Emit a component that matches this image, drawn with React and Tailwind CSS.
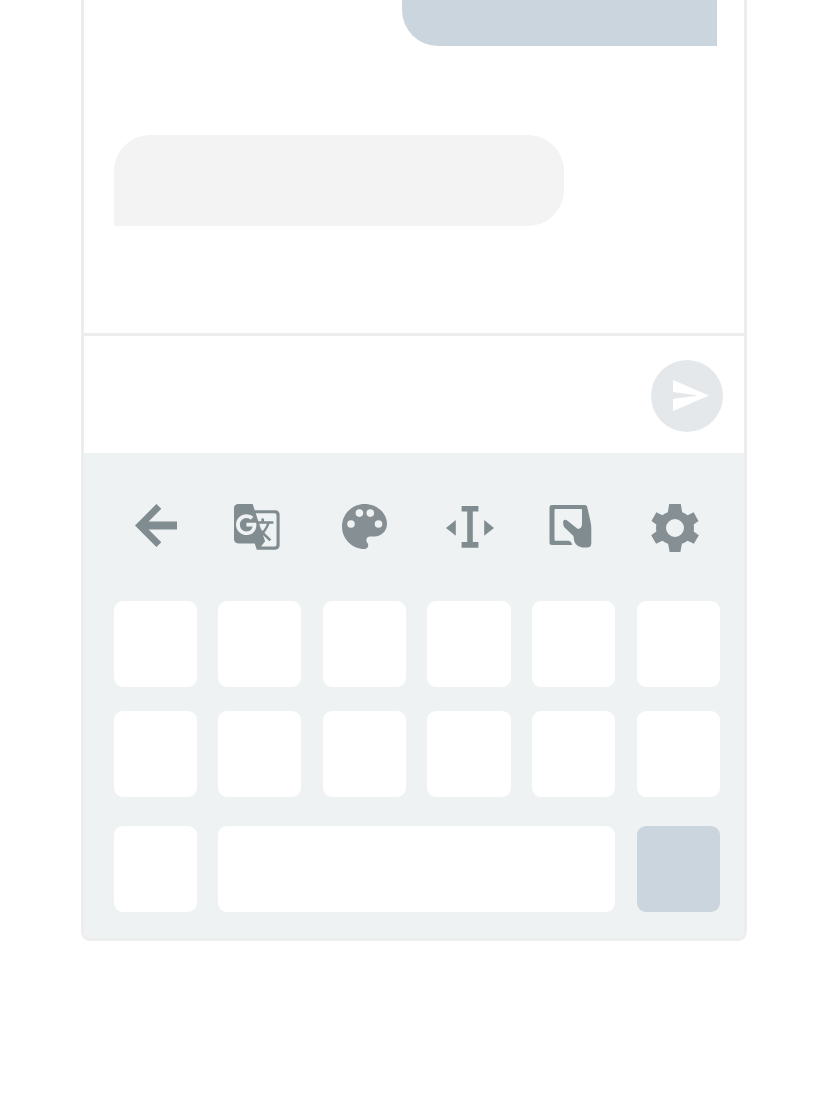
import { MdGTranslate } from "react-icons/md";

function Tool({ viewBox, label, children }) {
  return (
    <button aria-label={label} className="h-[70px] w-20">
      <svg viewBox={viewBox} className="block h-[70px] w-20" fill="currentColor">
        {children}
      </svg>
    </button>
  );
}

function Toolbar() {
  return (
    <div className="flex gap-6 pl-8 text-[#808c90]">
      <Tool label="Back" viewBox="-4 0 80 70">
        <path d="M15 35.6 36.4 14l4.9 4.8L28.6 31.5H57v8.1H28.6L41.3 52.3l-4.9 4.8Z" />
      </Tool>
      <Tool label="Translate" viewBox="0 0 80 70">
        <MdGTranslate x="11.9" y="11.9" size="49.8" />
      </Tool>
      <Tool label="Theme" viewBox="-1 0 80 70">
        <path
          fill="#868f94"
          transform="translate(9.5 6.5) scale(2.5)"
          d="M12 3c-4.97 0-9 4.03-9 9s4.03 9 9 9c.83 0 1.5-.67 1.5-1.5 0-.39-.15-.74-.39-1.01-.23-.26-.38-.61-.38-.99 0-.83.67-1.5 1.5-1.5H16c2.76 0 5-2.24 5-5 0-4.42-4.03-8-9-8z"
        />
        <g fill="#eef2f3">
          <circle cx="26" cy="34" r="3.8" />
          <circle cx="34.4" cy="23.1" r="3.8" />
          <circle cx="45.3" cy="23.1" r="3.8" />
          <circle cx="53.5" cy="34" r="3.8" />
        </g>
      </Tool>
      <Tool label="Text editing" viewBox="-2 0 80 70">
        <path d="M31.6 16h16.8v5.6h-5.6V52h5.6v5.7H31.6V52h5.6V21.6h-5.6ZM16 37.9l9.8-8v15.9ZM64 37.9l-9.8-8v15.9Z" />
      </Tool>
      <Tool label="One-handed mode" viewBox="-3 0 80 70">
        <path d="M17 14.9H50Q51.7 14.9 52.2 17L55.6 32Q56.3 35 56.3 40V53Q56.3 57.5 52 57.5H47Q38.7 56.3 38.5 46L29.8 37.8Q27.6 35.5 28.3 31Q30 28.7 32.5 30.8L42.8 39.1Q47 38.5 47 34V20Q47 19 46 19H20.5Q19.5 19 19.5 20V49.7Q19.5 50.7 20.5 50.7H33.6Q36.5 51.2 37 55H17Q14.5 55 14.5 52.5V17.3Q14.5 14.9 17 14.9Z" />
      </Tool>
      <Tool label="Settings" viewBox="1 0 80 70">
        <path
          fill="#868f94"
          fillRule="evenodd"
          d="M34.2 14H45.8L47.2 22.3Q50 23.3 52.6 25.2L58.6 22.2L63.5 31L58.7 34.6Q59.2 38 58.7 41.4L63.8 45.3L58.9 53.8L52.6 50.8Q50 52.7 46.9 53.8L45.4 62H34.6L33.1 53.8Q30 52.7 27.4 50.8L21.1 53.8L16.2 45.3L21.3 41.4Q20.8 38 21.3 34.6L16.5 31L21.4 22.2L27.4 25.2Q30 23.3 32.8 22.3ZM40 29A9 9 0 1 0 40 47A9 9 0 1 0 40 29Z"
        />
      </Tool>
    </div>
  );
}

function Key({ className = "bg-white" }) {
  return <div className={`h-[86px] rounded-[9px] ${className}`} />;
}

export default function App() {
  return (
    <main className="h-[1098px] w-[828px] bg-white pl-[81px]">
      <section className="flex h-[941px] w-[666px] flex-col overflow-hidden rounded-b-[9px] border-x-[3px] border-b-[3px] border-[#ededed]">
        <div className="flex h-[336px] flex-col border-b-[3px] border-[#ededed] pr-[27px] pl-[30px]">
          <div className="h-[46px] w-[315px] self-end rounded-bl-[36px] bg-[#cbd5de]" />
          <div className="mt-[89px] h-[91px] w-[450.4px] rounded-t-[36px] rounded-br-[36px] bg-[#f3f3f3]" />
        </div>
        <div className="flex h-[117px] items-start justify-end pt-6 pr-[21px]">
          <button aria-label="Send" className="size-[72px] rounded-full bg-[#e4e8eb]">
            <svg viewBox="0 0 72 72" className="block size-[72px] fill-white">
              <path d="M22 20 58 35.5 22 51V39L47 35.5 22 32Z" />
            </svg>
          </button>
        </div>
        <div className="flex-1 bg-[#eef2f3] pt-[37px]">
          <Toolbar />
          <div className="mt-[41px] grid w-[636px] grid-cols-6 gap-x-[21.3px] gap-y-6 pl-[29.5px]">
            {Array.from({ length: 12 }, (_, i) => (
              <Key key={i} />
            ))}
          </div>
          <div className="mt-[29px] grid w-[636px] grid-cols-6 gap-x-[21.3px] pl-[29.5px]">
            <Key />
            <Key className="col-span-4 bg-white" />
            <Key className="bg-[#cbd5de]" />
          </div>
        </div>
      </section>
    </main>
  );
}
